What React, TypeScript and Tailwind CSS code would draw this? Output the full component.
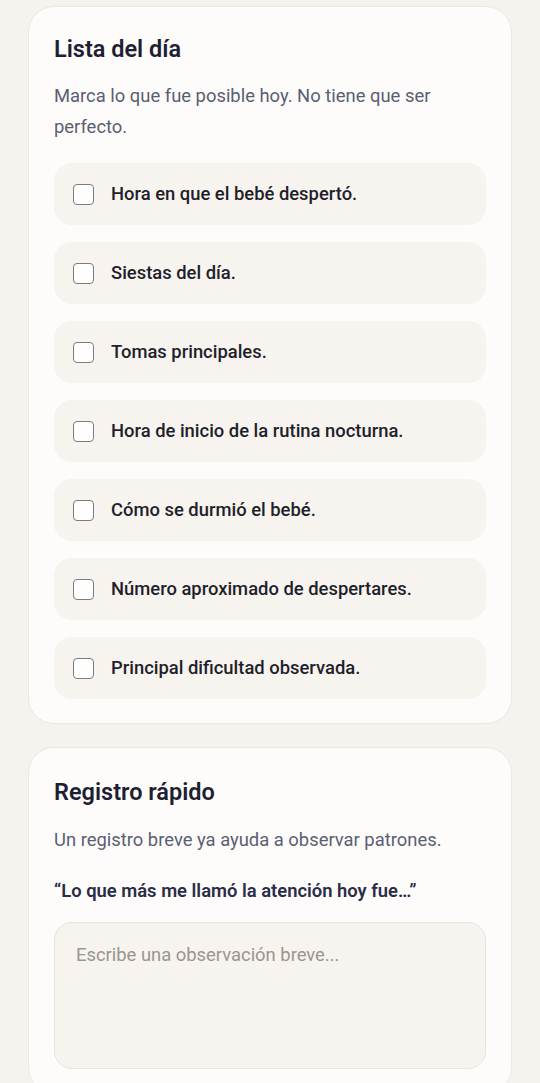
import React from "react";

const items = [
  "Hora en que el bebé despertó.",
  "Siestas del día.",
  "Tomas principales.",
  "Hora de inicio de la rutina nocturna.",
  "Cómo se durmió el bebé.",
  "Número aproximado de despertares.",
  "Principal dificultad observada.",
];

export default function App() {
  return (
    <div
      className="min-h-[1083px] bg-[#f6f2ed] px-[28px] pt-[6px] flex flex-col gap-[23px]"
      style={{ fontFamily: "Roboto, 'Noto Sans', sans-serif" }}
    >
      <section className="rounded-[26px] border border-[#ebe7e2] bg-[#fdfcfa] px-[25px] pt-[26px] pb-[24px]">
        <h2 className="text-[23.5px] leading-[32px] font-semibold text-[#1e1f33]">Lista del día</h2>
        <p className="mt-[15px] text-[18.4px] leading-[31px] text-[#5b5e72]">
          Marca lo que fue posible hoy. No tiene que ser perfecto.
        </p>
        <ul className="mt-[21px] flex flex-col gap-[17px]">
          {items.map((t) => (
            <li
              key={t}
              className="h-[62px] rounded-[18px] bg-[#f7f3ee] flex items-center pl-[19px] gap-[17px]"
            >
              <span className="w-[21px] h-[21px] rounded-[4px] border-[1.5px] border-[#7d7d7d] bg-[#fefefe] shrink-0" />
              <span className="text-[18.4px] font-medium text-[#1f1f2c]">{t}</span>
            </li>
          ))}
        </ul>
      </section>

      <section className="rounded-[26px] border border-[#ebe7e2] bg-[#fdfcfa] px-[25px] pt-[28px] pb-[24px]">
        <h2 className="text-[23.5px] leading-[32px] font-semibold text-[#1e1f33]">Registro rápido</h2>
        <p className="mt-[16px] text-[18.4px] leading-[31px] text-[#5b5e72]">
          Un registro breve ya ayuda a observar patrones.
        </p>
        <p className="mt-[20px] text-[18.4px] leading-[31px] font-semibold text-[#2a2c48]">
          “Lo que más me llamó la atención hoy fue…”
        </p>
        <div className="mt-[16px] h-[147px] rounded-[18px] border border-[#e8e4df] bg-[#f7f3ee] px-[21px] pt-[18px]">
          <span className="text-[18.4px] leading-[28px] text-[#9a9592]">Escribe una observación breve...</span>
        </div>
      </section>
    </div>
  );
}
